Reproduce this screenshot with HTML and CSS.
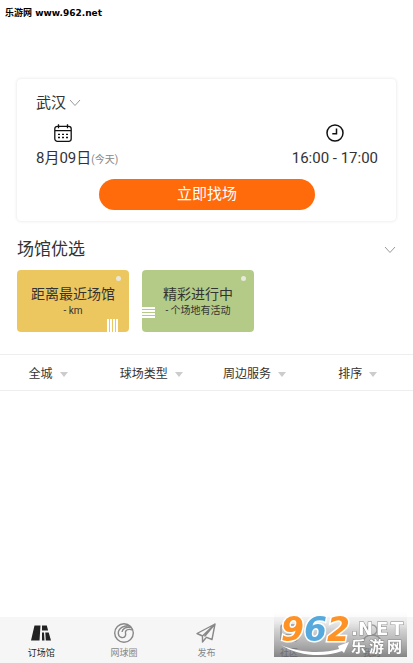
FILE: index.html
```html
<!DOCTYPE html>
<html lang="zh-CN">
<head>
<meta charset="utf-8">
<meta name="viewport" content="width=device-width, initial-scale=1">
<title>订场馆</title>
<link rel="stylesheet" href="styles.css">
</head>
<body>
<header class="site">乐游网 www.962.net</header>

<main class="content">
  <section class="search-card">
    <button class="city" type="button">武汉
      <svg width="12" height="8" viewBox="0 0 12 8"><path d="M1 1l5 5.500 5-5.500" fill="none" stroke="#999"/></svg>
    </button>
    <div class="when">
      <button class="slot" type="button">
        <svg class="slot-icon date-icon" width="18" height="18" viewBox="0 0 18 18" fill="none" stroke="#111" stroke-width="1.300">
          <rect x=".8" y="2.300" width="16.400" height="15" rx="2.500"/>
          <path d="M1 6.600h16M4.500 .3v4M13.500 .3v4"/>
          <path d="M4 10.300h2M8 10.300h2M12 10.300h2M4 13.500h2M8 13.500h2M12 13.500h2"/>
        </svg>
        <span class="slot-text">8月09日<small>(今天)</small></span>
      </button>
      <button class="slot" type="button">
        <svg class="slot-icon" width="18" height="18" viewBox="0 0 18 18" fill="none" stroke="#111" stroke-width="1.500">
          <circle cx="9" cy="9" r="8"/><path d="M10.500 4.500v5.200H6.300"/>
        </svg>
        <span class="slot-text">16:00 - 17:00</span>
      </button>
    </div>
    <button class="find" type="button">立即找场</button>
  </section>

  <section class="picks">
    <div class="picks-head">
      <h2>场馆优选</h2>
      <svg width="12" height="8" viewBox="0 0 12 8"><path d="M1 1l5 5.500 5-5.500" fill="none" stroke="#999"/></svg>
    </div>
    <div class="tiles">
      <a class="tile nearest" href="#nearest"><strong>距离最近场馆</strong><span>- km</span></a>
      <a class="tile live" href="#live"><strong>精彩进行中</strong><span>- 个场地有活动</span></a>
    </div>
  </section>

  <div class="filters">
    <button type="button">全城</button>
    <button type="button">球场类型</button>
    <button type="button">周边服务</button>
    <button type="button">排序</button>
  </div>
</main>

<nav class="tabs">
  <a class="active" href="#book">
    <svg width="22" height="22" viewBox="0 0 22 22" fill="#222"><path d="M4.500 3.500H10.500L9.500 18.500H1zM12 3.500h4.800l1.300 5H12zM12 10.500h2l.5 8H12zM15.300 10.500h3.400l2.300 8h-5.200z"/></svg>
    订场馆</a>
  <a href="#circle">
    <svg width="22" height="22" viewBox="0 0 22 22" fill="none" stroke="#888" stroke-width="1.400"><circle cx="11" cy="11" r="9.300"/><path d="M17 4C11 2.800 5 6.500 5.300 11.500c.3 4.500 6 5.500 7.200 2 .7-2-.8-3 .3-4.500 1.300-1.700 4.500-1.800 7-.8M18 5.500C13 4.500 9.500 6.500 9 10"/></svg>
    网球圈</a>
  <a href="#post">
    <svg width="22" height="22" viewBox="0 0 22 22" fill="none" stroke="#888" stroke-width="1.400" stroke-linejoin="round"><path d="M20 2L2 11.500l5.500 2.500L20 2 17 17.500l-6-2.300M20 2L9.500 14.500M7.500 14v6l3.500-4.200"/></svg>
    发布</a>
  <a href="#community">
    <svg width="22" height="22" viewBox="0 0 22 22" fill="none" stroke="#888" stroke-width="1.500"><rect x="3" y="3" width="16" height="16" rx="2"/><path d="M7 9h8M7 13h8"/></svg>
    社区</a>
  <a href="#me">
    <svg width="22" height="22" viewBox="0 0 22 22" fill="none" stroke="#888" stroke-width="1.500"><circle cx="11" cy="8" r="5"/><path d="M2 20c1-5 4-7 9-7s8 2 9 7"/></svg>
    我的</a>
</nav>

<svg class="stamp" width="135" height="64" viewBox="0 0 135 64" role="img" aria-label="962.NET 乐游网">
  <defs>
    <linearGradient id="shade" x1="0" y1="0" x2="0" y2="1">
      <stop offset="0" stop-color="#eee" stop-opacity="0"/><stop offset=".4" stop-color="#aaa" stop-opacity=".5"/><stop offset="1" stop-color="#555" stop-opacity=".7"/>
    </linearGradient>
  </defs>
  <rect x="0" y="13" width="133" height="45" fill="url(#shade)"/>
  <path d="M7 46c18 8 42 9 58 4l-1-3 11-4-5 11-2-2C50 59 24 57 7 46z" fill="#fff"/>
  <g class="digits">
    <text x="7" y="42" fill="#ff9225">9</text><text x="30" y="42" fill="#55a9dd">6</text><text x="53" y="42" fill="#ff9225">2</text>
  </g>
  <text class="domain" y="36"><tspan x="77">.</tspan><tspan x="84">N</tspan><tspan x="102">E</tspan><tspan x="117">T</tspan></text>
  <text class="brand" y="53"><tspan x="77">乐</tspan><tspan x="95">游</tspan><tspan x="113">网</tspan></text>
</svg>
</body>
</html>
```
FILE: styles.css
```css
* { box-sizing: border-box; }

body {
  margin: 0;
  min-height: 100vh;
  display: flex;
  flex-direction: column;
  background: #fff;
  color: #333;
  font-family: Roboto, "Noto Sans CJK SC", sans-serif;
}

button {
  padding: 0;
  border: 0;
  background: none;
  color: inherit;
  font: inherit;
  cursor: pointer;
}

a { color: inherit; text-decoration: none; }

svg { display: block; flex: none; }

.site {
  padding: 5px;
  color: #000;
  font: bold 9px/16px "DejaVu Sans", "Noto Sans CJK SC", sans-serif;
}

.content { flex: 1; padding-top: 52px; }

.search-card {
  margin: 0 16px;
  padding: 14px 18px 11px 19px;
  border: 1px solid #f4f4f4;
  border-radius: 5px;
  box-shadow: 0 0 3px #f0f0f0;
}

.city {
  display: flex;
  align-items: center;
  gap: 3px;
  font-size: 15px;
  line-height: 20px;
}

.when {
  display: flex;
  justify-content: space-between;
  margin-top: 11px;
}

.slot {
  display: flex;
  flex-direction: column;
  align-items: center;
  gap: 6px;
}

.slot:first-child { align-items: flex-start; }

.slot-text { font-size: 15px; line-height: 20px; }

.date-icon { margin-left: 18px; }

.slot small { color: #888; font-size: 10px; }

.find {
  display: block;
  width: 216px;
  height: 31px;
  margin: 9px auto 0;
  border-radius: 16px;
  background: #ff6a0a;
  color: #fff;
  font-size: 15px;
  line-height: 31px;
}

.picks { padding: 15px 17px 22px; }

.picks-head {
  display: flex;
  align-items: center;
  justify-content: space-between;
}

.picks h2 {
  margin: 0;
  font-size: 17px;
  font-weight: 400;
  line-height: 25px;
}

.tiles { display: flex; gap: 13px; margin-top: 8px; }

.tile {
  position: relative;
  display: flex;
  flex-direction: column;
  align-items: center;
  width: 112px;
  height: 62px;
  padding-top: 14px;
  border-radius: 4px;
  line-height: 20px;
}

.tile strong { font-size: 14px; font-weight: 400; }

.tile span { font-size: 10px; line-height: 14px; }

.tile::before {
  content: "";
  position: absolute;
  top: 6px;
  right: 8px;
  width: 5px;
  height: 5px;
  border-radius: 50%;
  background: #e8e8de;
}

.tile::after { content: ""; position: absolute; }

.nearest { background: #ecc760; }

.nearest::after {
  right: 11px;
  bottom: 0;
  width: 11px;
  height: 13px;
  background: repeating-linear-gradient(90deg, #fff 0 2px, transparent 2px 3px);
}

.live { background: #b4cb87; }

.live::after {
  left: 0;
  bottom: 14px;
  width: 13px;
  height: 11px;
  background: repeating-linear-gradient(#fff 0 2px, transparent 2px 3px);
}

.filters {
  display: grid;
  grid-template-columns: repeat(4, 1fr);
  border: solid #eee;
  border-width: 1px 0;
}

.filters button {
  display: flex;
  align-items: center;
  justify-content: center;
  gap: 7px;
  padding: 3px 7px 0 0;
  font-size: 12px;
  line-height: 32px;
}

.filters button::after {
  content: "";
  border: solid transparent;
  border-width: 5px 4px 0;
  border-top-color: #ccc;
}

.tabs {
  display: grid;
  grid-template-columns: repeat(5, 1fr);
  background: #f6f6f6;
}

.tabs a {
  display: flex;
  flex-direction: column;
  align-items: center;
  gap: 2px;
  padding: 5px 0 3px;
  color: #888;
  font-size: 9px;
  line-height: 14px;
}

.tabs .active { color: #222; }

.stamp {
  position: fixed;
  right: 4px;
  bottom: 0;
}

.digits {
  font: italic bold 33px "DejaVu Sans", sans-serif;
  stroke: #fff;
  stroke-width: 3px;
  paint-order: stroke;
}

.domain, .brand {
  fill: #fff;
  stroke: #888;
  stroke-width: 1px;
  paint-order: stroke;
}

.domain { font: bold 18px "DejaVu Sans", sans-serif; }

.brand { font: bold 15px "Noto Sans CJK SC", sans-serif; }
```
